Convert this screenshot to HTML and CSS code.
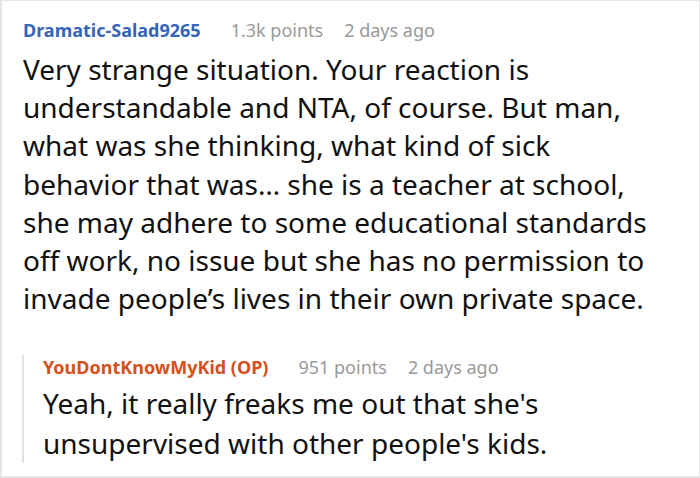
FILE: index.html
```html
<!DOCTYPE html>
<html>
<head>
<meta charset="utf-8">
<link rel="stylesheet" href="styles.css">
</head>
<body>
<div class="thread">
  <div class="comment">
    <div class="meta">
      <span class="user">Dramatic-Salad9265</span>
      <span class="info">1.3k points</span>
      <span class="info">2 days ago</span>
    </div>
    <p class="body">Very strange situation. Your reaction is understandable and NTA, of course. But man, what was she thinking, what kind of sick behavior that was… she is a teacher at school, she may adhere to some educational standards off work, no issue but she has no permission to invade people’s lives in their own private space.</p>
  </div>
  <div class="reply">
    <div class="meta">
      <span class="user op">YouDontKnowMyKid (OP)</span>
      <span class="info">951 points</span>
      <span class="info">2 days ago</span>
    </div>
    <p class="body">Yeah, it really freaks me out that she's unsupervised with other people's kids.</p>
  </div>
</div>
</body>
</html>
```
FILE: styles.css
```css
html, body {
  margin: 0;
  padding: 0;
  background: #fff;
}
.thread {
  box-sizing: border-box;
  width: 700px;
  height: 478px;
  border: 1px solid #e6e6e6;
  border-left-width: 2px;
  border-bottom-width: 2px;
  padding: 17px 50px 0 21px;
  font-family: "Noto Sans", sans-serif;
  color: #111;
}
.meta {
  display: flex;
  align-items: baseline;
  gap: 21px;
  font-size: 18px;
  line-height: 24px;
  white-space: nowrap;
}
.user {
  font-weight: 700;
  color: #3565b8;
  margin-right: 9px;
}
.user.op {
  color: #d4501c;
}
.info {
  color: #999;
}
.body {
  margin: 0;
  font-size: 28px;
  line-height: 38.2px;
}
.comment .body {
  margin-top: 8px;
}
.reply {
  margin: 50px 0 0 -1px;
  border-left: 2px solid #e2e2e2;
  padding-left: 19px;
}
.reply .meta {
  margin-top: -12px;
}
.reply .body {
  line-height: 40px;
  margin-top: 4px;
  margin-bottom: -10px;
}
```
